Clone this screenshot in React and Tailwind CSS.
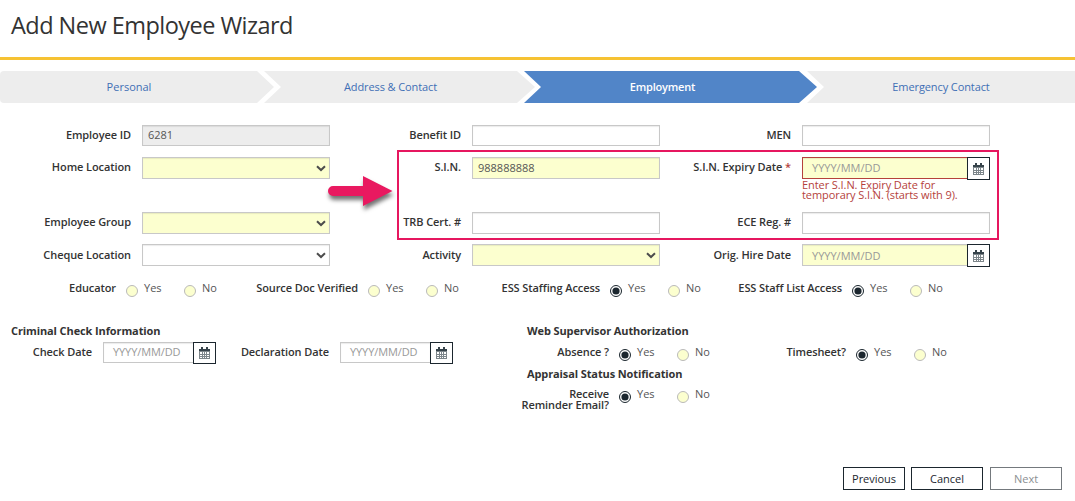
const steps = [
  { name: 'Personal', cls: 'w-[274px] rounded-l bg-[#ededed] pr-4 text-[#3f6fb5] [clip-path:polygon(0_0,257px_0,100%_50%,257px_100%,0_100%)]' },
  { name: 'Address & Contact', cls: '-ml-[10px] w-[271px] bg-[#ededed] pr-[18px] tracking-[-0.1px] text-[#3f6fb5] [clip-path:polygon(0_0,253px_0,100%_50%,253px_100%,0_100%,17px_50%)]' },
  { name: 'Employment', cls: '-ml-[11px] w-[293px] bg-[#5185c8] pr-4 text-white font-semibold tracking-[-0.2px] [clip-path:polygon(0_0,275px_0,100%_50%,275px_100%,0_100%,17px_50%)]' },
  { name: 'Emergency Contact', cls: '-ml-[10px] flex-1 bg-[#ededed] tracking-[-0.1px] text-[#3f6fb5] [clip-path:polygon(0_0,100%_0,100%_100%,0_100%,17px_50%)]' },
];

function CalendarIcon() {
  return (
    <svg width="11" height="12" viewBox="0 0 11 12" shapeRendering="crispEdges">
      <path d="M0 2h11v10H0z" fill="#7d868b" />
      <path d="M0 2h11v2H0zM2 0h2v3H2zM7 0h2v3H7z" fill="#36434b" />
      <path d="M1 5h2v2H1zM4 5h1v2H4zM6 5h1v2H6zM8 5h2v2H8zM1 8h2v1H1zM4 8h1v1H4zM6 8h1v1H6zM8 8h2v1H8zM1 10h2v1H1zM4 10h1v1H4zM6 10h1v1H6zM8 10h2v1H8z" fill="#fff" />
    </svg>
  );
}

function Chevron() {
  return (
    <svg width="10" height="7" viewBox="0 0 10 7" fill="none" stroke="#4c4c4c" strokeWidth="2">
      <path d="M1 1.2L5 5L9 1.2" />
    </svg>
  );
}

function Label({ children, low }) {
  return <div className={`${low ? 'pt-[3px]' : 'pt-0.5'} w-[131px] shrink-0 text-right leading-4 font-semibold tracking-[-0.09px] text-[#333]`}>{children}</div>;
}

function Box({ yellow, grey, value, select, short }) {
  const bg = yellow ? 'bg-[#fcffcf]' : grey ? 'bg-[#ededed]' : 'bg-white';
  return (
    <div className={`${bg} ${short ? 'h-[21px]' : 'h-[22px]'} flex w-[188px] items-center border border-[#c8c8c8] px-[5px] text-[#555] shadow-[inset_0_1px_1px_rgba(0,0,0,0.08)]`}>
      <span className="flex-1">{value}</span>
      {select && <span className="-mr-[2px]"><Chevron /></span>}
    </div>
  );
}

function DateBox({ wide, error, low }) {
  const look = wide ? `h-[22px] w-[165px] bg-[#fcffcf] ${error ? 'border-[#b5423c]' : 'border-[#c8c8c8]'}` : 'h-[21px] w-[90px] bg-white border-[#c8c8c8] tracking-[-0.1px]';
  return (
    <div className="flex">
      <div className={`${look} ${low ? 'pt-0.5' : ''} flex items-center border border-r-0 pl-[9px] text-[#999] shadow-[inset_0_1px_1px_rgba(0,0,0,0.08)]`}>YYYY/MM/DD</div>
      <div className={`${wide ? 'h-[23px]' : 'h-[22px]'} flex w-[23px] items-center justify-center border border-[#1b262e] bg-white`}><CalendarIcon /></div>
    </div>
  );
}

function Field({ label, low, children }) {
  return (
    <div className="flex w-[330px] gap-[11px]">
      <Label low={low}>{label}</Label>
      <div>{children}</div>
    </div>
  );
}

function Radio({ on, text }) {
  return (
    <div className="flex w-[58px] text-[#555]">
      <svg className="mt-[5px] mr-1.5 shrink-0" width="12" height="12" viewBox="0 0 12 12">
        <circle cx="6" cy="6" r="5.5" fill={on ? '#fff' : '#fcffcf'} stroke={on ? '#1b262e' : '#b9b9b9'} />
        {on && <circle cx="6" cy="6" r="3.6" fill="#1b262e" />}
      </svg>
      <span className="leading-4">{text}</span>
    </div>
  );
}

function RadioGroup({ label, labelClass, on }) {
  return (
    <div className="flex">
      <div className={`${labelClass} flex shrink-0 justify-end text-right font-semibold tracking-[-0.09px] whitespace-nowrap text-[#333]`}>{label}</div>
      <div className="ml-2.5 flex">
        <Radio on={on} text="Yes" />
        <Radio text="No" />
      </div>
    </div>
  );
}

function Button({ children, cls }) {
  return <button className={`${cls} h-[23px] border text-[11px] leading-none`}>{children}</button>;
}

export default function App() {
  return (
    <div className="relative flex h-[501px] w-[1075px] flex-col overflow-hidden bg-white font-['Open_Sans','Noto_Sans',sans-serif] text-[11px] text-[#333]">
      <header className="h-[60px] border-b-3 border-[#f6c233] pt-2 pl-[11px]">
        <h1 className="text-[23.5px] leading-[34px] tracking-[-0.53px] text-[#333]">Add New Employee Wizard</h1>
      </header>

      <nav className="mt-[11px] flex h-8">
        {steps.map((s) => (
          <div key={s.name} className={`${s.cls} flex items-center justify-center`}>{s.name}</div>
        ))}
      </nav>

      <section className="mt-[22px]">
        <div className="flex h-8">
          <Field label="Employee ID"><Box grey short value="6281" /></Field>
          <Field label="Benefit ID"><Box short /></Field>
          <Field label="MEN"><Box short /></Field>
        </div>
        <div className="flex h-[55px]">
          <Field label="Home Location"><Box yellow select /></Field>
          <Field label="S.I.N."><Box yellow value="988888888" /></Field>
          <Field label={<>S.I.N. Expiry Date <span className="text-[#b5423c]">*</span></>}>
            <DateBox wide error />
            <p className="leading-[10px] tracking-[-0.08px] whitespace-nowrap text-[#b5423c]">Enter S.I.N. Expiry Date for<br />temporary S.I.N. (starts with 9).</p>
          </Field>
        </div>
        <div className="flex h-8">
          <Field label="Employee Group"><Box yellow select /></Field>
          <Field label="TRB Cert. #"><Box /></Field>
          <Field label="ECE Reg. #"><Box /></Field>
        </div>
        <div className="flex h-9">
          <Field low label="Cheque Location"><Box select /></Field>
          <Field low label="Activity"><Box yellow select /></Field>
          <Field low label="Orig. Hire Date"><DateBox wide low /></Field>
        </div>
      </section>

      <section className="flex h-[43px] leading-4">
        <RadioGroup label="Educator" labelClass="w-[116px]" />
        <RadioGroup label="Source Doc Verified" labelClass="w-[116px]" />
        <RadioGroup label="ESS Staffing Access" labelClass="w-[116px]" on />
        <RadioGroup label="ESS Staff List Access" labelClass="w-[116px]" on />
      </section>

      <section className="flex">
        <div className="w-[527px]">
          <h2 className="pl-[11px] leading-4 font-bold tracking-[-0.11px]">Criminal Check Information</h2>
          <div className="mt-[3px] flex">
            <div className="w-[92px] pt-0.5 text-right leading-4 font-semibold tracking-[-0.09px]">Check Date</div>
            <div className="ml-[11px]"><DateBox /></div>
            <div className="w-[113px] pt-0.5 text-right leading-4 font-semibold tracking-[-0.09px]">Declaration Date</div>
            <div className="ml-[11px]"><DateBox /></div>
          </div>
        </div>
        <div className="flex-1">
          <h2 className="leading-4 font-bold tracking-[-0.11px]">Web Supervisor Authorization</h2>
          <div className="mt-[5px] flex leading-4">
            <RadioGroup label="Absence ?" labelClass="w-[82px]" on />
            <RadioGroup label="Timesheet?" labelClass="w-[111px]" on />
          </div>
          <h2 className="mt-[5px] leading-4 font-bold tracking-[-0.11px]">Appraisal Status Notification</h2>
          <div className="mt-1 flex leading-4">
            <RadioGroup label={<div className="pt-[2px] leading-[11px]">Receive<br />Reminder Email?</div>} labelClass="w-[82px]" on />
          </div>
        </div>
      </section>

      <footer className="mt-auto mb-[11px] flex pl-[843px]">
        <Button cls="w-[62px] border-[#1b262e] text-[#1b262e] tracking-[-0.05px]">Previous</Button>
        <Button cls="ml-1.5 w-[72px] border-[#1b262e] text-[#1b262e]">Cancel</Button>
        <Button cls="ml-[7px] w-[72px] border-[#74797d] text-[#8b8f92]">Next</Button>
      </footer>

      <div className="absolute top-[150px] left-[397px] h-[90px] w-[602px] border-2 border-[#e6175f]" />
      <svg className="absolute top-[170px] left-[322px] drop-shadow-[1px_4px_2px_rgba(0,0,0,0.55)]" width="76" height="46" viewBox="0 0 76 46">
        <path d="M11 16H41V6L70.500 21L41 36V26H11A5 5 0 0 1 11 16Z" fill="#e91960" />
      </svg>
    </div>
  );
}
